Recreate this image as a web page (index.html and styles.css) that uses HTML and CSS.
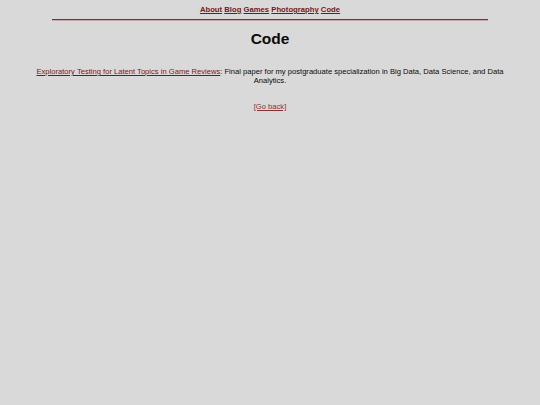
FILE: index.html
```html
<!DOCTYPE html>
<html>
<head>
<meta charset="utf-8">
<link rel="stylesheet" href="styles.css">
</head>
<body>
<nav class="nav">
  <a href="#">About</a> <a href="#">Blog</a> <a href="#">Games</a> <a href="#">Photography</a> <a href="#">Code</a>
</nav>
<hr class="rule">
<main class="content">
  <h1 class="title">Code</h1>
  <p class="entry"><a href="#">Exploratory Testing for Latent Topics in Game Reviews</a>: Final paper for my postgraduate specialization in Big Data, Data Science, and Data Analytics.</p>
  <p class="back"><a href="#">[Go back]</a></p>
</main>
</body>
</html>
```

FILE: styles.css
```css
html, body {
  margin: 0;
  padding: 0;
  background: #d9d9d9;
}
body {
  font-family: "Liberation Sans", Arial, sans-serif;
  color: #0a0a0a;
}
a {
  color: #7a1616;
}
.nav {
  text-align: center;
  font-weight: bold;
  font-size: 7.7px;
  padding-top: 4px;
  line-height: 11px;
}
.rule {
  width: 436px;
  margin: 4px auto 0;
  border: 0;
  border-top: 1px solid #8c2a2a;
  border-bottom: 1px solid #c8a8a8;
  height: 0;
}
.content {
  max-width: 472px;
  margin: 0 auto;
  text-align: center;
}
.title {
  font-size: 15.5px;
  margin: 9px 0 0;
  line-height: 18px;
}
.entry {
  font-size: 7.6px;
  line-height: 9px;
  margin: 19px 0 0;
}
.back {
  font-size: 7.6px;
  line-height: 10px;
  margin: 17px 0 0;
}
.back a {
  color: #8a3030;
}
```
